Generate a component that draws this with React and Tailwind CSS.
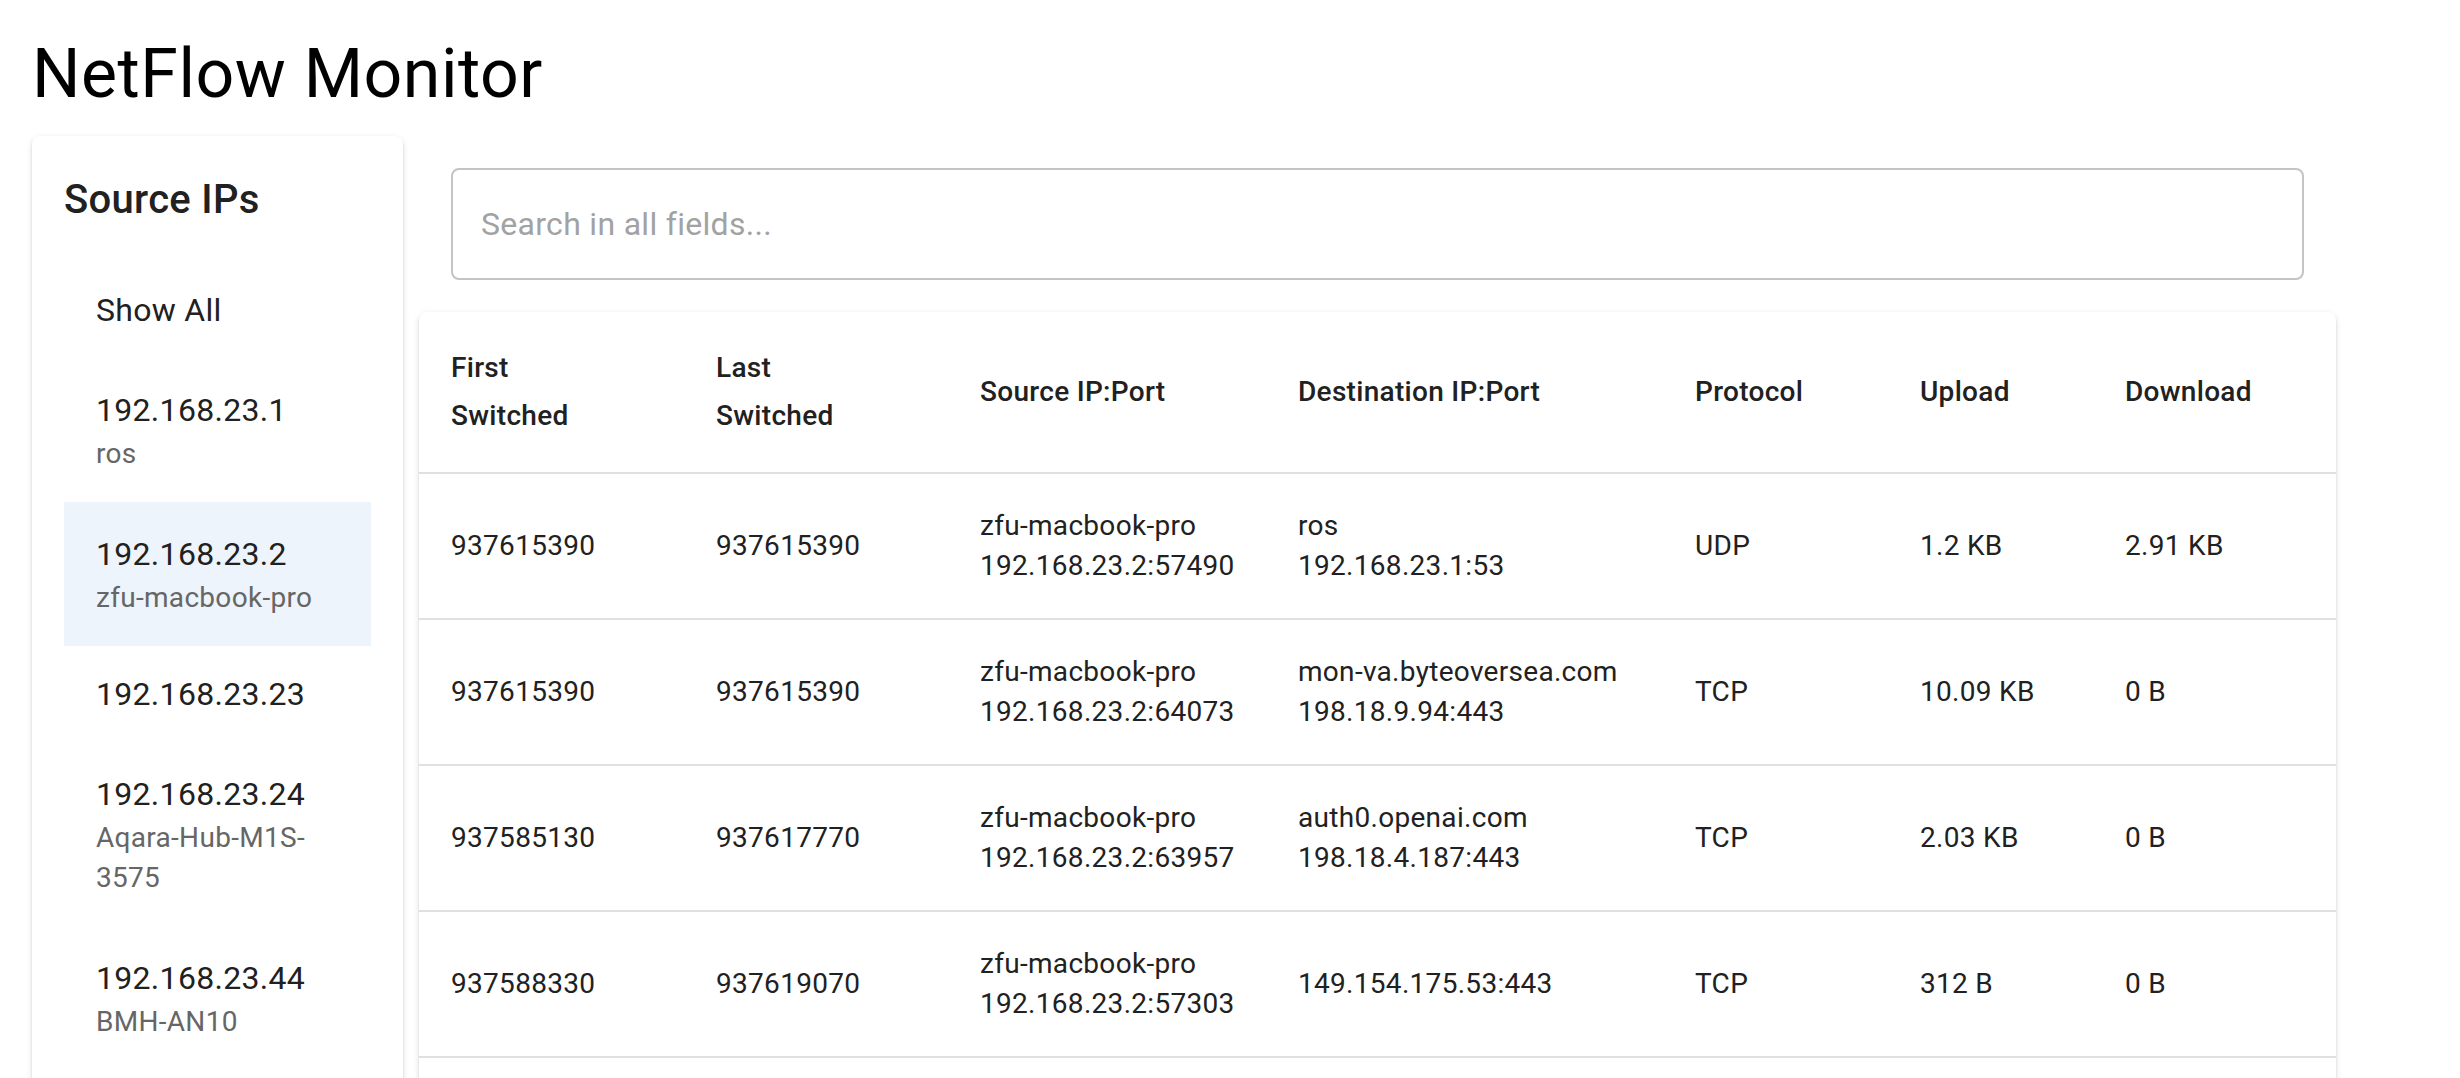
import React, { useState } from "react";

const sourceIps = [
  { ip: "192.168.23.1", name: "ros" },
  { ip: "192.168.23.2", name: "zfu-macbook-pro" },
  { ip: "192.168.23.23" },
  { ip: "192.168.23.24", name: "Aqara-Hub-M1S-3575" },
  { ip: "192.168.23.44", name: "BMH-AN10" },
];

const flows = [
  { first: "937615390", last: "937615390", srcName: "zfu-macbook-pro", src: "192.168.23.2:57490", dstName: "ros", dst: "192.168.23.1:53", proto: "UDP", up: "1.2 KB", down: "2.91 KB" },
  { first: "937615390", last: "937615390", srcName: "zfu-macbook-pro", src: "192.168.23.2:64073", dstName: "mon-va.byteoversea.com", dst: "198.18.9.94:443", proto: "TCP", up: "10.09 KB", down: "0 B" },
  { first: "937585130", last: "937617770", srcName: "zfu-macbook-pro", src: "192.168.23.2:63957", dstName: "auth0.openai.com", dst: "198.18.4.187:443", proto: "TCP", up: "2.03 KB", down: "0 B" },
  { first: "937588330", last: "937619070", srcName: "zfu-macbook-pro", src: "192.168.23.2:57303", dst: "149.154.175.53:443", proto: "TCP", up: "312 B", down: "0 B" },
  { first: "937588410", last: "937619120", srcName: "zfu-macbook-pro", src: "192.168.23.2:57311", dst: "149.154.175.53:443", proto: "TCP", up: "288 B", down: "0 B" },
];

const paperShadow =
  "shadow-[0px_4px_2px_-2px_rgba(0,0,0,0.2),0px_2px_2px_0px_rgba(0,0,0,0.14),0px_2px_6px_0px_rgba(0,0,0,0.12)]";

const IpItem = ({ ip, name, selected, onClick }) => (
  <li
    onClick={onClick}
    className={`px-8 py-4 cursor-pointer ${selected ? "bg-[#edf4fb]" : ""}`}
  >
    <div className={name ? "my-3" : "my-2"}>
      <div className="text-[32px] leading-[48px] tracking-[0.00938em] text-[#212121]">{ip}</div>
      {name && (
        <div className="text-[28px] leading-[40px] tracking-[0.01071em] text-[#666666]">{name}</div>
      )}
    </div>
  </li>
);

const Cell = ({ children }) => (
  <td className="px-8 py-8 border-b-2 border-[#e0e0e0] text-[28px] leading-[40px] tracking-[0.01071em] text-[#212121] align-middle">
    {children}
  </td>
);

const Head = ({ children, w }) => (
  <th className={`${w} px-8 py-8 border-b-2 border-[#e0e0e0] text-left text-[28px] leading-[48px] tracking-[0.01071em] font-medium text-[#212121] align-middle`}>
    {children}
  </th>
);

export default function App() {
  const [selected, setSelected] = useState("192.168.23.2");
  const [search, setSearch] = useState("");

  return (
    <div className="h-[1078px] overflow-hidden bg-white p-8 font-['Roboto',sans-serif]">
      <h1 className="mb-5 text-[68px] leading-[84px] tracking-[0.00735em] font-normal text-black">NetFlow Monitor</h1>

      <div className="flex items-start gap-4 w-[2304px]">
        <aside className={`w-[371px] shrink-0 rounded-lg bg-white p-8 ${paperShadow}`}>
          <h2 className="mb-[14px] text-[40px] leading-[64px] tracking-[0.0075em] font-medium text-[#212121]">Source IPs</h2>
          <ul className="py-4">
            <IpItem ip="Show All" selected={selected === null} onClick={() => setSelected(null)} />
            {sourceIps.map((s) => (
              <IpItem
                key={s.ip}
                ip={s.ip}
                name={s.name}
                selected={selected === s.ip}
                onClick={() => setSelected(s.ip)}
              />
            ))}
          </ul>
        </aside>

        <main className="flex-1 min-w-0">
          <div className="p-8">
            <input
              value={search}
              onChange={(e) => setSearch(e.target.value)}
              placeholder="Search in all fields..."
              className="block w-full h-[112px] rounded-lg border-2 border-[#c4c4c4] bg-white px-[28px] text-[32px] tracking-[0.00938em] text-[#212121] outline-none placeholder:text-[#a2a2a2]"
            />
          </div>

          <div className={`overflow-hidden rounded-lg bg-white ${paperShadow}`}>
            <table className="w-full table-fixed border-collapse">
              <thead>
                <tr>
                  <Head w="w-[265px]">First<br />Switched</Head>
                  <Head w="w-[264px]">Last<br />Switched</Head>
                  <Head w="w-[318px]">Source IP:Port</Head>
                  <Head w="w-[397px]">Destination IP:Port</Head>
                  <Head w="w-[225px]">Protocol</Head>
                  <Head w="w-[205px]">Upload</Head>
                  <Head w="w-[243px]">Download</Head>
                </tr>
              </thead>
              <tbody>
                {flows.map((f, i) => (
                  <tr key={i}>
                    <Cell>{f.first}</Cell>
                    <Cell>{f.last}</Cell>
                    <Cell>
                      <div>{f.srcName}</div>
                      <div>{f.src}</div>
                    </Cell>
                    <Cell>
                      {f.dstName && <div>{f.dstName}</div>}
                      <div>{f.dst}</div>
                    </Cell>
                    <Cell>{f.proto}</Cell>
                    <Cell>{f.up}</Cell>
                    <Cell>{f.down}</Cell>
                  </tr>
                ))}
              </tbody>
            </table>
          </div>
        </main>
      </div>
    </div>
  );
}
